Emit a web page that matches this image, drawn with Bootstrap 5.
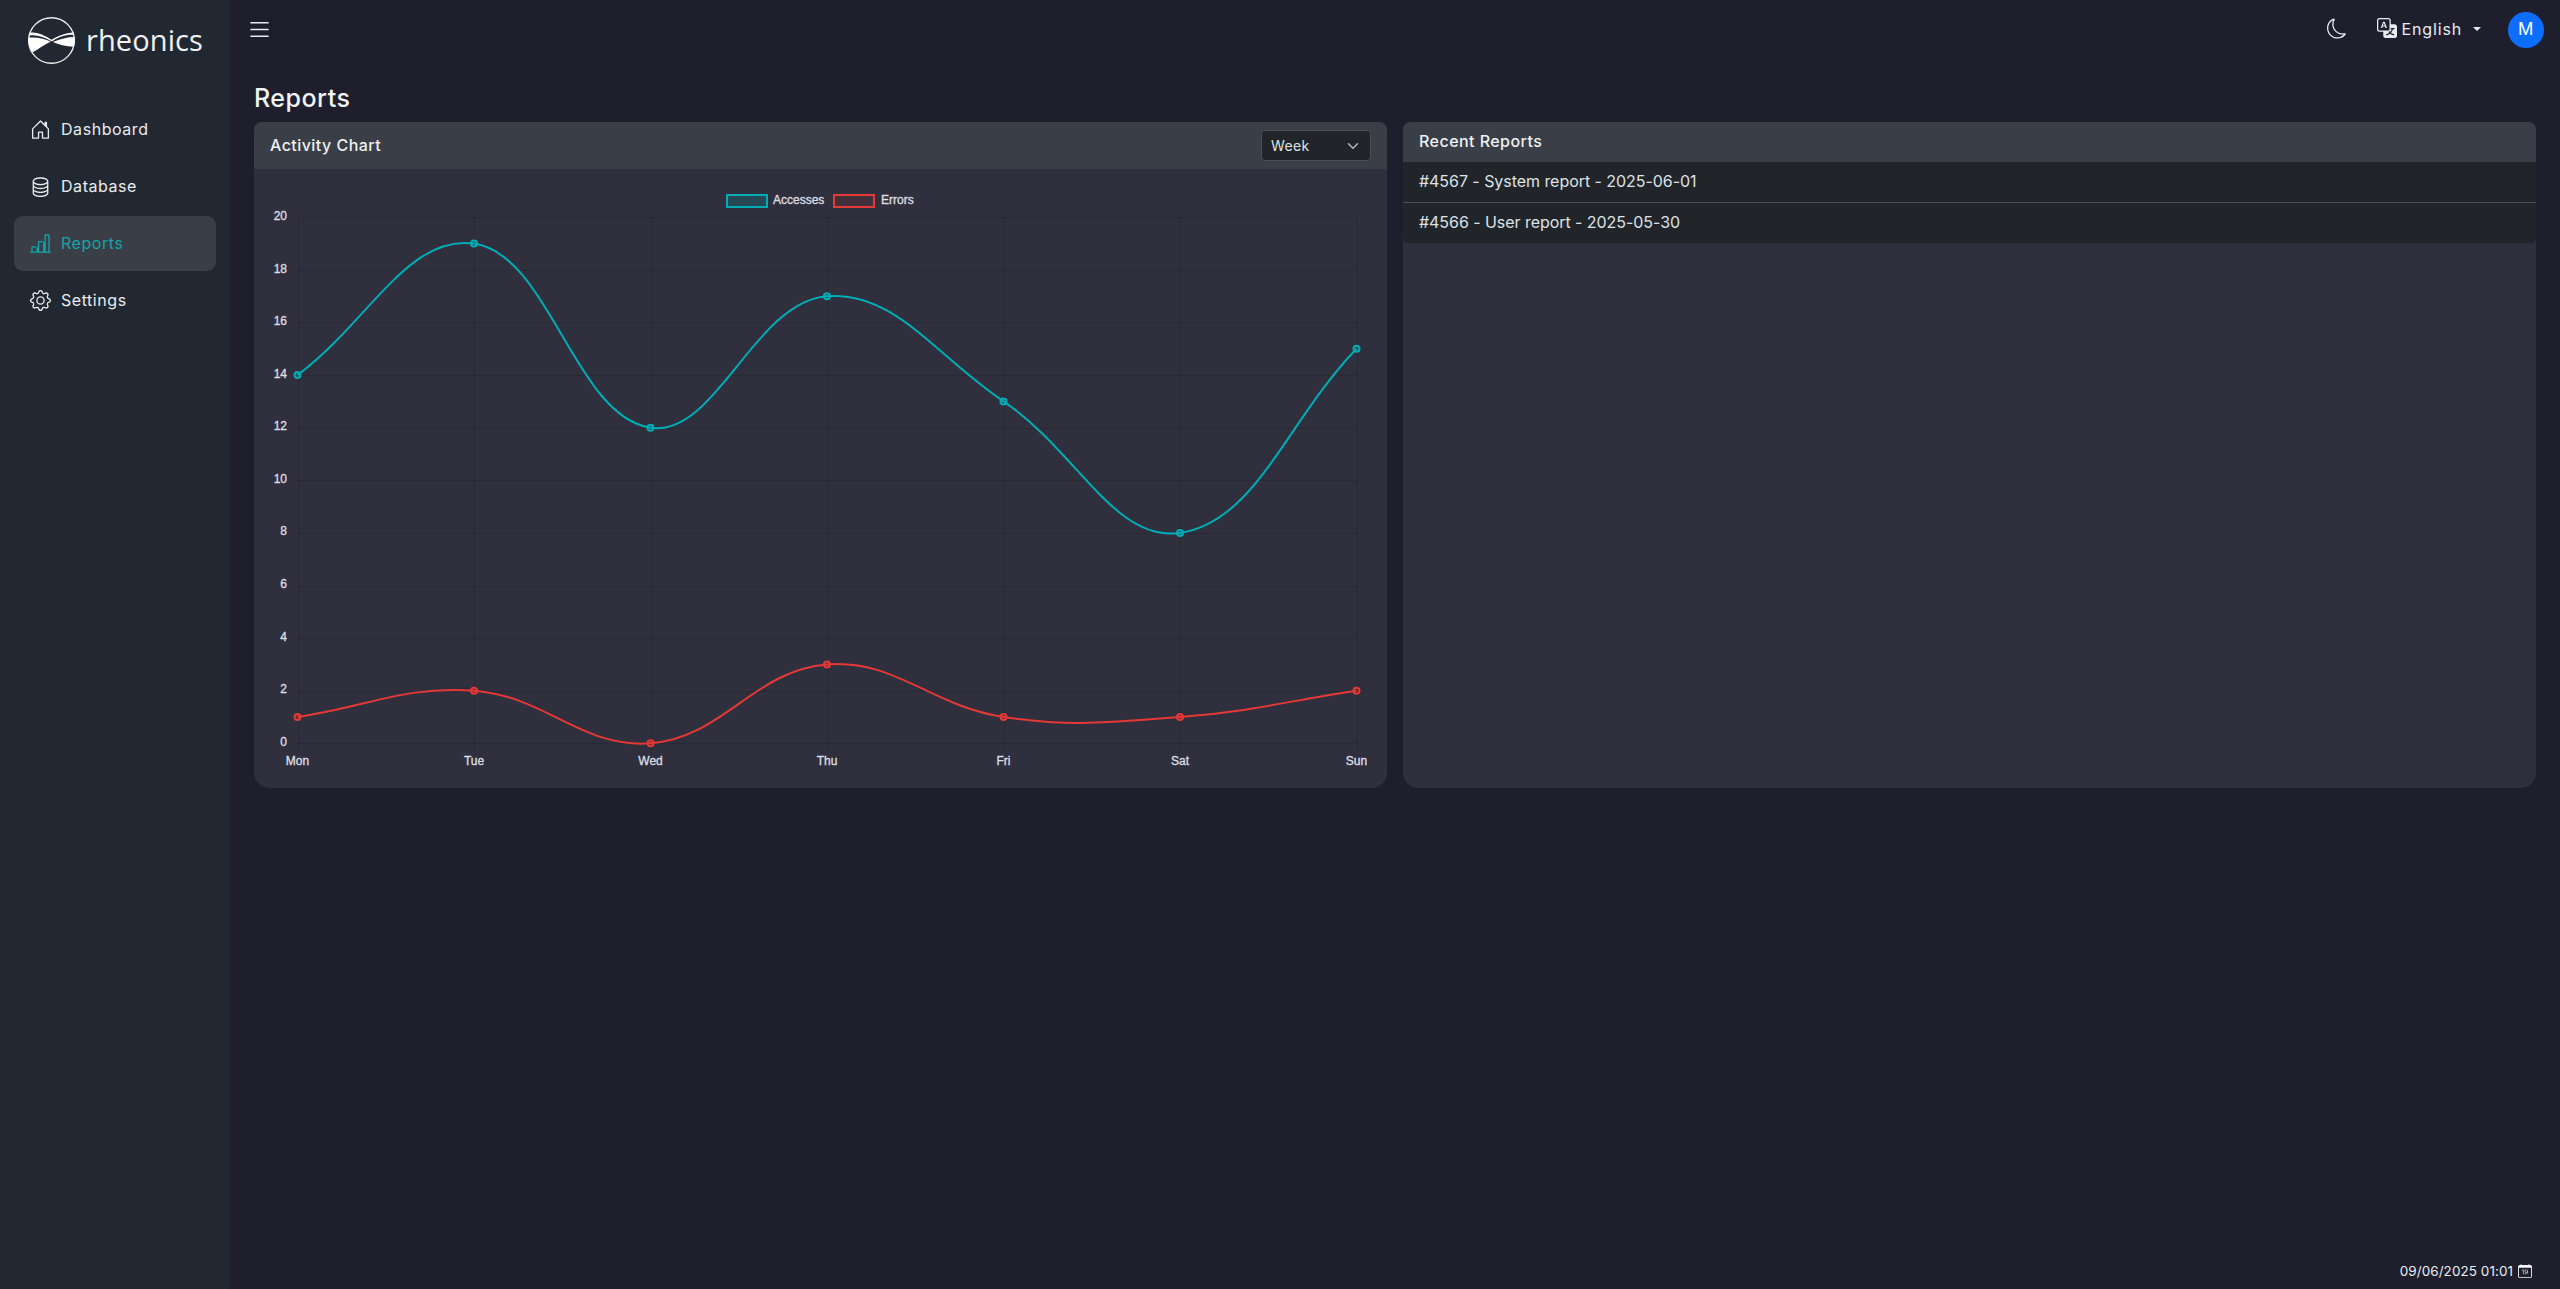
<!DOCTYPE html>
<html lang="en" data-bs-theme="dark">
<head>
<meta charset="utf-8">
<title>Reports</title>
<link rel="stylesheet" href="https://cdn.jsdelivr.net/npm/bootstrap@5.3.0/dist/css/bootstrap.min.css">
<style>
html,body{height:100%}
body{background:#1e1e2d;color:#e9ecef;font-family:"Inter","Noto Sans",sans-serif;font-size:16px;letter-spacing:.45px}
.app-shell{height:100vh;overflow:hidden}
.side-panel{width:230px;flex:none;background:#212832}
.brand-box{height:102px;padding:17px 0 0 28px;gap:11px;align-items:flex-start}
.brand-name{font-family:"Open Sans",sans-serif;font-size:29px;line-height:45px;color:#f1f1f1;letter-spacing:.1px}
.side-nav{padding:0 14px;gap:2px}
.side-nav .nav-link{height:55px;padding:0 0 1px 16px;gap:10px;color:#e9ecef;border-radius:9px;display:flex;align-items:center;font-size:16px;letter-spacing:.55px}
.side-nav .nav-link.active{background:#3a3e46;color:#12a5ab}
.side-icon{width:21px;height:21px;fill:currentColor;flex:none}
.top-strip{height:60px;padding:0 16px 0 16px}
.menu-icon{width:27px;height:27px;fill:#e9ecef;margin-top:-2px}
.moon-icon{width:20px;height:21px;fill:#e9ecef;margin-right:30px;margin-top:-3px}
.lang-btn{padding:0;border:0;color:#e9ecef;font-size:16px;gap:5px;margin-right:27px;margin-top:-3px;letter-spacing:.85px}
.lang-btn:hover{color:#e9ecef}
.lang-icon{width:20px;height:20px;fill:#e9ecef;margin-top:-2px}
.lang-btn.dropdown-toggle::after{margin-left:6px}
.user-dot{width:36px;height:36px;border-radius:50%;background:#0d6efd;color:#fff;font-size:17px}
.content-area{padding:24px 24px 0}
.page-heading{font-size:25px;line-height:29px;margin:0 0 9px;font-weight:500;color:#f1f3f5;letter-spacing:.5px}
.report-card{height:666px;background:#2f2f3d;border:0;border-radius:8px 8px 15px 15px;overflow:hidden;color:#e9ecef}
.report-card .card-header{background:#3a3e46;border:0;border-radius:0;font-weight:500;color:#eef0f2;font-size:16px;padding:0 16px}
.hdr-tall{height:47px}
.hdr-short{height:40px}
.hdr-label{position:relative;top:-1px}
.range-select{width:110px;height:31px;min-height:31px;background-color:#212529;border-color:#495057;color:#dee2e6;font-size:14px;padding:0 24px 0 9px;border-radius:4px;background-position:right 9px center;letter-spacing:.4px}
.chart-box{width:100%;height:619px;display:block}
.chart-box text{font-family:"Liberation Sans",Arial,sans-serif;font-size:12px;fill:#dcdce0;stroke:#dcdce0;stroke-width:.35px;letter-spacing:0;dominant-baseline:central}
.report-list .list-group-item{height:40px;background:#212529;color:#dee2e6;border-color:#495057;padding:0 16px 2px;display:flex;align-items:center;font-size:16px;letter-spacing:-.05px}
.report-list .list-group-item:first-child{height:41px}
.clock-bar{padding:0 28px 8px 0;font-size:13.5px;gap:5px;color:#e9ecef;letter-spacing:.05px}
.clock-icon{width:14px;height:14px;fill:#f5f5f5}
</style>
</head>
<body>
<div class="app-shell d-flex">
  <aside class="side-panel d-flex flex-column">
    <div class="brand-box d-flex">
      <svg width="47" height="47" viewBox="16 16 136 136" aria-hidden="true">
        <circle cx="84" cy="84" r="66" fill="none" stroke="#eee" stroke-width="4"/>
        <path fill="#fff" d="M19 62C40 58 62 68 84 82C100 72 125 62 148 61L150 68C125 66 105 74 90 84L84 86C62 74 40 66 18 70Z"/>
        <path fill="#fff" d="M17 76C45 74 65 80 82 87C65 95 45 110 30 118C20 106 15 90 17 76Z"/>
        <path fill="#fff" d="M88 88C108 80 130 74 152 74C153 82 152 92 148 102C125 100 105 96 88 88Z"/>
      </svg>
      <span class="brand-name">rheonics</span>
    </div>
    <nav class="nav flex-column side-nav">
      <a class="nav-link" href="#"><svg class="side-icon" viewBox="0 0 16 16"><path d="M8.354 1.146a.5.5 0 0 0-.708 0l-6 6A.5.5 0 0 0 1.5 7.5v7a.5.5 0 0 0 .5.5h4.5a.5.5 0 0 0 .5-.5v-4h2v4a.5.5 0 0 0 .5.5H14a.5.5 0 0 0 .5-.5v-7a.5.5 0 0 0-.146-.354L13 5.793V2.5a.5.5 0 0 0-.5-.5h-1a.5.5 0 0 0-.5.5v1.293zM2.5 14V7.707l5.5-5.5 5.5 5.5V14H10v-4a.5.5 0 0 0-.5-.5h-3a.5.5 0 0 0-.5.5v4z"/></svg>Dashboard</a>
      <a class="nav-link" href="#"><svg class="side-icon" viewBox="0 0 16 16"><path d="M4.318 2.687C5.234 2.271 6.536 2 8 2s2.766.27 3.682.687C12.644 3.125 13 3.627 13 4c0 .374-.356.875-1.318 1.313C10.766 5.729 9.464 6 8 6s-2.766-.27-3.682-.687C3.356 4.875 3 4.373 3 4c0-.374.356-.875 1.318-1.313M13 5.698V7c0 .374-.356.875-1.318 1.313C10.766 8.729 9.464 9 8 9s-2.766-.27-3.682-.687C3.356 7.875 3 7.373 3 7V5.698c.271.202.58.378.904.525C4.978 6.711 6.427 7 8 7s3.022-.289 4.096-.777A5 5 0 0 0 13 5.698M14 4c0-1.007-.875-1.755-1.904-2.223C11.022 1.289 9.573 1 8 1s-3.022.289-4.096.777C2.875 2.245 2 2.993 2 4v9c0 1.007.875 1.755 1.904 2.223C4.978 15.71 6.427 16 8 16s3.022-.289 4.096-.777C13.125 14.755 14 14.007 14 13zm-1 4.698V10c0 .374-.356.875-1.318 1.313C10.766 11.729 9.464 12 8 12s-2.766-.27-3.682-.687C3.356 10.875 3 10.373 3 10V8.698c.271.202.58.378.904.525C4.978 9.71 6.427 10 8 10s3.022-.289 4.096-.777A5 5 0 0 0 13 8.698m0 3V13c0 .374-.356.875-1.318 1.313C10.766 14.729 9.464 15 8 15s-2.766-.27-3.682-.687C3.356 13.875 3 13.373 3 13v-1.302c.271.202.58.378.904.525C4.978 12.71 6.427 13 8 13s3.022-.289 4.096-.777c.324-.147.633-.323.904-.525"/></svg>Database</a>
      <a class="nav-link active" href="#"><svg class="side-icon" viewBox="0 0 16 16"><path d="M11 2a1 1 0 0 1 1-1h2a1 1 0 0 1 1 1v12h.5a.5.5 0 0 1 0 1H.5a.5.5 0 0 1 0-1H1v-3a1 1 0 0 1 1-1h2a1 1 0 0 1 1 1v3h1V7a1 1 0 0 1 1-1h2a1 1 0 0 1 1 1v7h1zm1 12h2V2h-2zm-1 0V7H7v7zm-5 0v-3H2v3z"/></svg>Reports</a>
      <a class="nav-link" href="#"><svg class="side-icon" viewBox="0 0 16 16"><path d="M8 4.754a3.246 3.246 0 1 0 0 6.492 3.246 3.246 0 0 0 0-6.492M5.754 8a2.246 2.246 0 1 1 4.492 0 2.246 2.246 0 0 1-4.492 0"/><path d="M9.796 1.343c-.527-1.79-3.065-1.79-3.592 0l-.094.319a.873.873 0 0 1-1.255.52l-.292-.16c-1.64-.892-3.433.902-2.54 2.541l.159.292a.873.873 0 0 1-.52 1.255l-.319.094c-1.79.527-1.79 3.065 0 3.592l.319.094a.873.873 0 0 1 .52 1.255l-.16.292c-.892 1.64.901 3.434 2.541 2.54l.292-.159a.873.873 0 0 1 1.255.52l.094.319c.527 1.79 3.065 1.79 3.592 0l.094-.319a.873.873 0 0 1 1.255-.52l.292.16c1.64.893 3.434-.902 2.54-2.541l-.159-.292a.873.873 0 0 1 .52-1.255l.319-.094c1.79-.527 1.79-3.065 0-3.592l-.319-.094a.873.873 0 0 1-.52-1.255l.16-.292c.893-1.64-.902-3.433-2.541-2.54l-.292.159a.873.873 0 0 1-1.255-.52zm-2.633.283c.246-.835 1.428-.835 1.674 0l.094.319a1.873 1.873 0 0 0 2.693 1.115l.291-.16c.764-.415 1.6.42 1.184 1.185l-.159.292a1.873 1.873 0 0 0 1.116 2.692l.318.094c.835.246.835 1.428 0 1.674l-.319.094a1.873 1.873 0 0 0-1.115 2.693l.16.291c.415.764-.42 1.6-1.185 1.184l-.291-.159a1.873 1.873 0 0 0-2.693 1.116l-.094.318c-.246.835-1.428.835-1.674 0l-.094-.319a1.873 1.873 0 0 0-2.692-1.115l-.292.16c-.764.415-1.6-.42-1.184-1.185l.159-.291A1.873 1.873 0 0 0 1.945 8.93l-.319-.094c-.835-.246-.835-1.428 0-1.674l.319-.094A1.873 1.873 0 0 0 3.06 4.377l-.16-.292c-.415-.764.42-1.6 1.185-1.184l.292.159a1.873 1.873 0 0 0 2.692-1.115z"/></svg>Settings</a>
    </nav>
  </aside>
  <main class="flex-grow-1 d-flex flex-column">
    <header class="top-strip d-flex align-items-center">
      <svg class="menu-icon" viewBox="0 0 16 16"><path fill-rule="evenodd" d="M2.5 12a.5.5 0 0 1 .5-.5h10a.5.5 0 0 1 0 1H3a.5.5 0 0 1-.5-.5m0-4a.5.5 0 0 1 .5-.5h10a.5.5 0 0 1 0 1H3a.5.5 0 0 1-.5-.5m0-4a.5.5 0 0 1 .5-.5h10a.5.5 0 0 1 0 1H3a.5.5 0 0 1-.5-.5"/></svg>
      <div class="ms-auto d-flex align-items-center">
        <svg class="moon-icon" viewBox="0 0 16 16"><path d="M6 .278a.77.77 0 0 1 .08.858 7.2 7.2 0 0 0-.878 3.46c0 4.021 3.278 7.277 7.318 7.277q.792-.001 1.533-.16a.79.79 0 0 1 .81.316.73.73 0 0 1-.031.893A8.35 8.35 0 0 1 8.344 16C3.734 16 0 12.286 0 7.71 0 4.266 2.114 1.312 5.124.06A.75.75 0 0 1 6 .278M4.858 1.311A7.27 7.27 0 0 0 1.025 7.71c0 4.02 3.279 7.276 7.319 7.276a7.32 7.32 0 0 0 5.205-2.162q-.506.063-1.029.063c-4.61 0-8.343-3.714-8.343-8.29 0-1.167.242-2.278.681-3.286"/></svg>
        <button class="btn dropdown-toggle lang-btn d-flex align-items-center" type="button"><svg class="lang-icon" viewBox="0 0 16 16"><path d="M4.545 6.714 4.11 8H3l1.862-5h1.284L8 8H6.833l-.435-1.286zm1.634-.736L5.5 3.956h-.049l-.679 2.022z"/><path d="M0 2a2 2 0 0 1 2-2h7a2 2 0 0 1 2 2v3h3a2 2 0 0 1 2 2v7a2 2 0 0 1-2 2H7a2 2 0 0 1-2-2v-3H2a2 2 0 0 1-2-2zm2-1a1 1 0 0 0-1 1v7a1 1 0 0 0 1 1h7a1 1 0 0 0 1-1V2a1 1 0 0 0-1-1zm7.138 9.995q.289.451.63.846c-.748.575-1.673 1.001-2.768 1.292.178.217.451.635.555.867 1.125-.359 2.08-.844 2.886-1.494.777.665 1.739 1.165 2.93 1.472.133-.254.414-.673.629-.89-1.125-.253-2.057-.694-2.82-1.284.681-.747 1.222-1.651 1.621-2.757H14V8h-3v1.047h.765c-.318.844-.74 1.546-1.272 2.13a6 6 0 0 1-.415-.492 2 2 0 0 1-.94.31"/></svg><span class="lang-text">English</span></button>
        <div class="user-dot d-flex align-items-center justify-content-center">M</div>
      </div>
    </header>
    <section class="content-area">
      <h1 class="page-heading">Reports</h1>
      <div class="row g-3">
        <div class="col-6">
          <div class="card report-card">
            <div class="card-header hdr-tall d-flex align-items-center justify-content-between">
              <span class="hdr-label">Activity Chart</span>
              <select class="form-select form-select-sm range-select"><option>Week</option><option>Month</option></select>
            </div>
            <svg class="chart-box" viewBox="254 169 1133 619" role="img" aria-label="Activity chart">
              <g id="gridGroup" stroke="#000" stroke-opacity=".11" stroke-width="1" shape-rendering="crispEdges"></g>
              <g text-anchor="end">
                <text x="287" y="216">20</text><text x="287" y="269">18</text><text x="287" y="321">16</text><text x="287" y="374">14</text><text x="287" y="426">12</text><text x="287" y="479">10</text><text x="287" y="531">8</text><text x="287" y="584">6</text><text x="287" y="637">4</text><text x="287" y="689">2</text><text x="287" y="742">0</text>
              </g>
              <g text-anchor="middle">
                <text x="297.5" y="761">Mon</text><text x="474" y="761">Tue</text><text x="650.5" y="761">Wed</text><text x="827" y="761">Thu</text><text x="1003.5" y="761">Fri</text><text x="1180" y="761">Sat</text><text x="1356.5" y="761">Sun</text>
              </g>
              <rect x="727" y="195" width="40" height="12" fill="#00adb5" fill-opacity=".2" stroke="#00adb5" stroke-width="2"/>
              <text x="773" y="199.5">Accesses</text>
              <rect x="834" y="195" width="40" height="12" fill="#e53935" fill-opacity=".1" stroke="#e53935" stroke-width="2"/>
              <text x="881" y="199.5">Errors</text>
              <path id="lineA" fill="none" stroke="#00adb5" stroke-width="2"/>
              <path id="lineE" fill="none" stroke="#e53935" stroke-width="2"/>
              <g id="dotsA" fill="#00adb5" fill-opacity=".2" stroke="#00adb5" stroke-width="2"></g>
              <g id="dotsE" fill="#e53935" fill-opacity=".2" stroke="#e53935" stroke-width="2"></g>
            </svg>
          </div>
        </div>
        <div class="col-6">
          <div class="card report-card">
            <div class="card-header hdr-short d-flex align-items-center"><span class="hdr-label">Recent Reports</span></div>
            <ul class="list-group list-group-flush report-list">
              <li class="list-group-item">#4567 - System report - 2025-06-01</li>
              <li class="list-group-item">#4566 - User report - 2025-05-30</li>
            </ul>
          </div>
        </div>
      </div>
    </section>
    <footer class="clock-bar mt-auto d-flex justify-content-end align-items-center">
      <span>09/06/2025 01:01</span>
      <svg class="clock-icon" viewBox="0 0 16 16"><path d="M6.445 11.688V6.354h-.633A13 13 0 0 0 4.5 7.16v.695c.375-.257.969-.62 1.258-.777h.012v4.61zm1.188-1.305c.047.64.594 1.406 1.703 1.406 1.258 0 2-1.066 2-2.871 0-1.934-.781-2.668-1.953-2.668-.926 0-1.797.672-1.797 1.809 0 1.16.824 1.77 1.676 1.77.746 0 1.23-.376 1.383-.79h.027c-.004 1.316-.461 2.164-1.305 2.164-.664 0-1.008-.45-1.05-.82zm2.953-2.317c0 .696-.559 1.18-1.184 1.18-.601 0-1.144-.383-1.144-1.2 0-.823.582-1.21 1.168-1.21.633 0 1.16.398 1.16 1.23"/><path d="M3.5 0a.5.5 0 0 1 .5.5V1h8V.5a.5.5 0 0 1 1 0V1h1a2 2 0 0 1 2 2v11a2 2 0 0 1-2 2H2a2 2 0 0 1-2-2V3a2 2 0 0 1 2-2h1V.5a.5.5 0 0 1 .5-.5M1 4v10a1 1 0 0 0 1 1h12a1 1 0 0 0 1-1V4z"/><path d="M1 4V3a1 1 0 0 1 1-1h12a1 1 0 0 1 1 1v1z"/></svg>
    </footer>
  </main>
</div>
<script src="https://cdn.jsdelivr.net/npm/bootstrap@5.3.0/dist/js/bootstrap.bundle.min.js"></script>
<script>
(function(){
  var NS='http://www.w3.org/2000/svg',x0=297.5,dx=176.5,y0=743.3,dy=26.3,T=.4;
  function el(parent,name,attrs){var e=document.createElementNS(NS,name);for(var k in attrs)e.setAttribute(k,attrs[k]);parent.appendChild(e);return e}
  var grid=document.getElementById('gridGroup');
  for(var i=0;i<=10;i++){var y=Math.round(y0-i*2*dy)+.5;el(grid,'line',{x1:x0-1,x2:x0+6*dx,y1:y,y2:y})}
  for(var j=0;j<7;j++){var x=Math.round(x0+j*dx);el(grid,'line',{x1:x,x2:x,y1:217,y2:751})}
  function draw(vals,lineId,dotsId){
    var p=vals.map(function(v,i){return{x:x0+i*dx,y:y0-v*dy}}),c=[];
    p.forEach(function(q,i){
      var a=p[Math.max(i-1,0)],b=p[Math.min(i+1,p.length-1)];
      var d1=Math.hypot(q.x-a.x,q.y-a.y),d2=Math.hypot(b.x-q.x,b.y-q.y),s=d1+d2||1;
      var fa=T*d1/s,fb=T*d2/s;
      c.push({px:q.x-fa*(b.x-a.x),py:q.y-fa*(b.y-a.y),nx:q.x+fb*(b.x-a.x),ny:q.y+fb*(b.y-a.y)});
    });
    var d='M'+p[0].x+' '+p[0].y;
    for(var i=1;i<p.length;i++)d+='C'+c[i-1].nx+' '+c[i-1].ny+' '+c[i].px+' '+c[i].py+' '+p[i].x+' '+p[i].y;
    document.getElementById(lineId).setAttribute('d',d);
    var g=document.getElementById(dotsId);
    p.forEach(function(q){el(g,'circle',{cx:q.x,cy:q.y,r:3})});
  }
  draw([14,19,12,17,13,8,15],'lineA','dotsA');
  draw([1,2,0,3,1,1,2],'lineE','dotsE');
})();
</script>
</body>
</html>
